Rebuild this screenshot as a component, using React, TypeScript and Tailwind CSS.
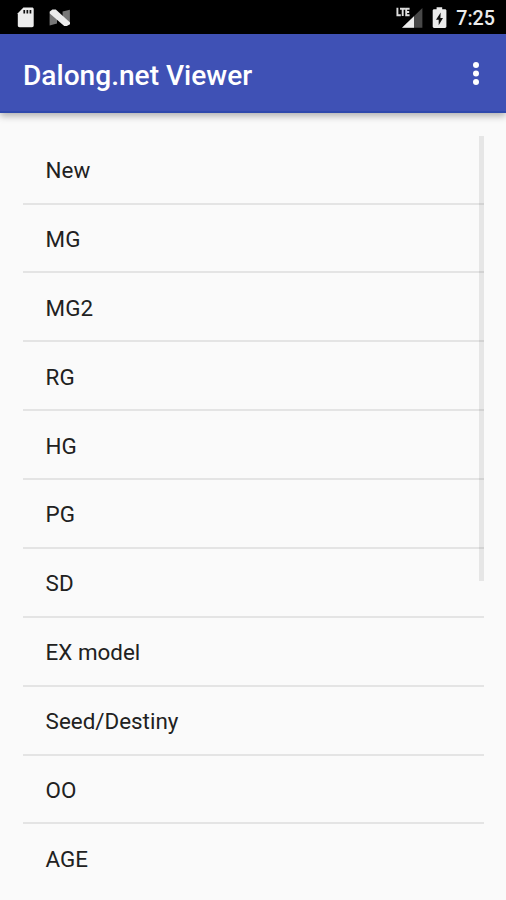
import React from 'react';

const categories = ['New', 'MG', 'MG2', 'RG', 'HG', 'PG', 'SD', 'EX model', 'Seed/Destiny', 'OO', 'AGE'];

const SdCardIcon: React.FC = () => (
  <svg width="17" height="21" viewBox="0 0 17 21">
    <path d="M6.4 0.4h8.6c1 0 1.7.7 1.7 1.7v16.4c0 1-.7 1.7-1.7 1.7H2.5c-1 0-1.7-.7-1.7-1.7V6.3z" fill="#ececec" />
    <path d="M6.4 3h1.7v3.5H6.4zM9.5 3h1.7v3.5H9.5zM12.6 3h1.7v3.5h-1.7z" fill="#111" />
  </svg>
);

const NougatIcon: React.FC = () => (
  <svg width="22" height="18" viewBox="0 0 22 18">
    <path d="M0.6 2.4 8 8v6.6L0.6 16.4z" fill="#777" />
    <path d="M13.6 2.6 20.9 0.8v14l-7.3-5z" fill="#777" />
    <path d="M0.8 2.6 3.4 0.5h3.4L21 13.4v1.8l-3.2 1.8h-2.6L0.8 4.4z" fill="#ececec" />
  </svg>
);

const SignalIcon: React.FC = () => (
  <svg width="28" height="22" viewBox="0 0 28 22">
    <path d="M26.4 1v19.8H6z" fill="#484848" />
    <path d="M18 9.2v11.6H6z" fill="#ececec" />
    <path d="M0 0h14.6v10H0z" fill="#000" />
    <path d="M1.4 0.8v7.4h3.4M4 1.8h5.2M6.7 1.8v7.2M13.6 1.8h-3.4v6.4h3.4M10.2 5h3" fill="none" stroke="#dedede" strokeWidth="1.9" />
  </svg>
);

const BatteryIcon: React.FC = () => (
  <svg width="15" height="22" viewBox="0 0 15 22">
    <path d="M4.6 0.2h5.6v2h2.8c.8 0 1.4.6 1.4 1.4v15.9c0 .8-.6 1.4-1.4 1.4H2.1c-.8 0-1.4-.6-1.4-1.4V3.6c0-.8.6-1.4 1.4-1.4h2.5z" fill="#ececec" />
    <path d="M8.7 5.5 4 12.7h2.7v5.5L11 10.9H8.4z" fill="#111" />
  </svg>
);

const StatusBar: React.FC = () => (
  <div className="flex h-[34px] items-start justify-between bg-black pl-[17px] pr-[11px] pt-[7px]">
    <div className="flex gap-[15px]">
      <SdCardIcon />
      <div className="pt-0.5">
        <NougatIcon />
      </div>
    </div>
    <div className="flex">
      <SignalIcon />
      <div className="ml-2">
        <BatteryIcon />
      </div>
      <span className="ml-[9px] text-[19.7px] leading-[23px] font-medium text-[#ececec]">7:25</span>
    </div>
  </div>
);

const AppBar: React.FC = () => (
  <header className="relative z-10 flex h-[79px] items-center justify-between border-b-2 border-[#2f49ac] bg-[#3f51b5] pl-[23px] pr-[26px] shadow-[0_3px_7px_rgba(0,0,0,0.3)]">
    <h1 className="pt-1.5 text-[28.1px] leading-8 font-medium text-white">Dalong.net Viewer</h1>
    <svg className="mt-0.5" width="8" height="26" viewBox="0 0 8 26" fill="#fff">
      <circle cx="4" cy="4" r="3" />
      <circle cx="4" cy="12.5" r="3" />
      <circle cx="4" cy="21" r="3" />
    </svg>
  </header>
);

export default function App() {
  return (
    <div className="h-[900px] w-full overflow-hidden bg-[#fafafa] font-[Roboto,sans-serif] select-none">
      <StatusBar />
      <AppBar />
      <main className="relative ml-[23px] mr-[22px] pt-[22.7px]">
        <ul>
          {categories.map(name => (
            <li key={name} className="flex h-[68.88px] items-center border-b-2 border-[#e4e4e4] pt-[3.4px] pl-[22.6px] text-[22.4px] text-[#212121] last:border-transparent">
              {name}
            </li>
          ))}
        </ul>
        {/* scroll thumb */}
        <div className="absolute right-0 top-[23px] h-[445px] w-[5px] bg-black/8" />
      </main>
    </div>
  );
}
